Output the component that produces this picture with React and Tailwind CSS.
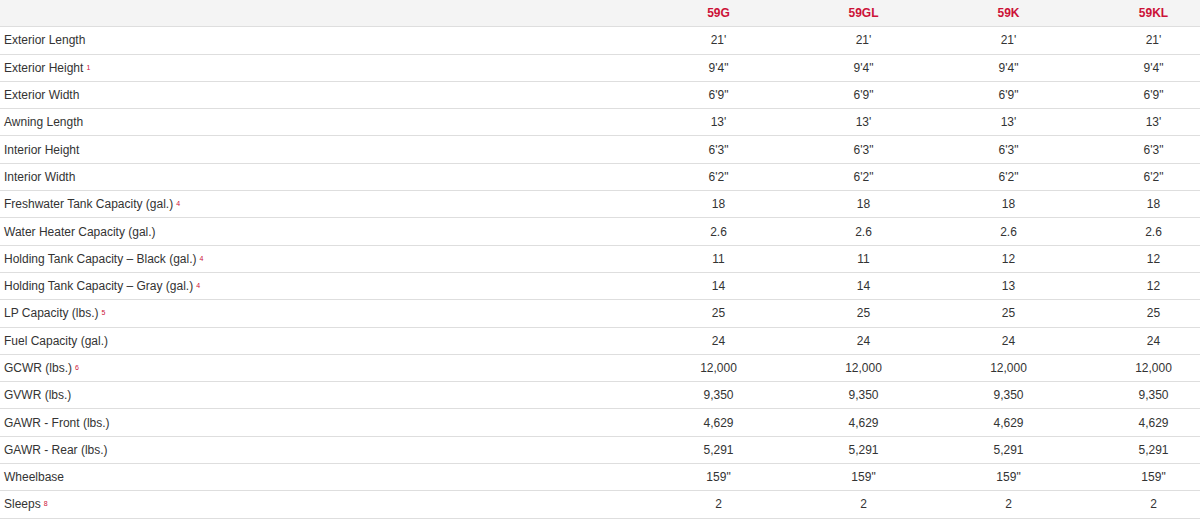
const models = ['59G', '59GL', '59K', '59KL']

const specs = [
  { label: 'Exterior Length', values: ["21'", "21'", "21'", "21'"] },
  { label: 'Exterior Height', note: '1', values: ['9\'4"', '9\'4"', '9\'4"', '9\'4"'] },
  { label: 'Exterior Width', values: ['6\'9"', '6\'9"', '6\'9"', '6\'9"'] },
  { label: 'Awning Length', values: ["13'", "13'", "13'", "13'"] },
  { label: 'Interior Height', values: ['6\'3"', '6\'3"', '6\'3"', '6\'3"'] },
  { label: 'Interior Width', values: ['6\'2"', '6\'2"', '6\'2"', '6\'2"'] },
  { label: 'Freshwater Tank Capacity (gal.)', note: '4', values: ['18', '18', '18', '18'] },
  { label: 'Water Heater Capacity (gal.)', values: ['2.6', '2.6', '2.6', '2.6'] },
  { label: 'Holding Tank Capacity \u2013 Black (gal.)', note: '4', values: ['11', '11', '12', '12'] },
  { label: 'Holding Tank Capacity \u2013 Gray (gal.)', note: '4', values: ['14', '14', '13', '12'] },
  { label: 'LP Capacity (lbs.)', note: '5', values: ['25', '25', '25', '25'] },
  { label: 'Fuel Capacity (gal.)', values: ['24', '24', '24', '24'] },
  { label: 'GCWR (lbs.)', note: '6', values: ['12,000', '12,000', '12,000', '12,000'] },
  { label: 'GVWR (lbs.)', values: ['9,350', '9,350', '9,350', '9,350'] },
  { label: 'GAWR - Front (lbs.)', values: ['4,629', '4,629', '4,629', '4,629'] },
  { label: 'GAWR - Rear (lbs.)', values: ['5,291', '5,291', '5,291', '5,291'] },
  { label: 'Wheelbase', values: ['159"', '159"', '159"', '159"'] },
  { label: 'Sleeps', note: '8', values: ['2', '2', '2', '2'] },
]

const rowGrid = 'grid grid-cols-[646px_145px_145px_145px_145px] h-[27.3px] items-center border-b border-[#dedede]'

export default function App() {
  return (
    <div className="w-[1200px] h-[519px] overflow-hidden bg-white text-[12px] text-[#333] font-['Liberation_Sans',Arial,sans-serif]">
      <div className="w-[1226px]">
        {/* Header */}
        <div className={`${rowGrid} bg-[#f4f4f4]`}>
          <div />
          {models.map((m) => (
            <div key={m} className="text-center font-bold text-[#cc1238]">
              {m}
            </div>
          ))}
        </div>

        {/* Rows */}
        {specs.map((row) => (
          <div key={row.label} className={rowGrid}>
            <div className="pl-1 whitespace-nowrap">
              {row.label}
              {row.note && (
                <sup className="ml-[3px] text-[7px] text-[#cc1238] relative -top-[2px]">{row.note}</sup>
              )}
            </div>
            {row.values.map((v, i) => (
              <div key={i} className="text-center">
                {v}
              </div>
            ))}
          </div>
        ))}
      </div>
    </div>
  )
}
